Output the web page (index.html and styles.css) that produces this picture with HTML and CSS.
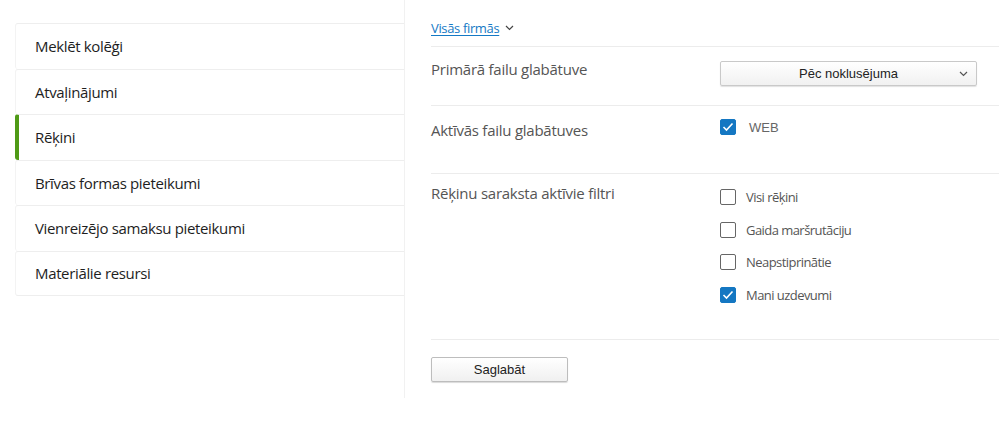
FILE: index.html
```html
<!DOCTYPE html>
<html lang="lv">
<head>
<meta charset="utf-8">
<link rel="stylesheet" href="styles.css">
</head>
<body>
<div class="page">
  <nav class="sidebar">
    <a class="nav-item">Meklēt kolēģi</a>
    <a class="nav-item">Atvaļinājumi</a>
    <a class="nav-item active">Rēķini</a>
    <a class="nav-item">Brīvas formas pieteikumi</a>
    <a class="nav-item">Vienreizējo samaksu pieteikumi</a>
    <a class="nav-item">Materiālie resursi</a>
  </nav>
  <main class="main">
    <div class="firm">
      <a class="firm-link">Visās firmās</a>
      <svg class="chev" width="9" height="6" viewBox="0 0 9 6"><path d="M1 1l3.5 3.5L8 1" fill="none" stroke="#444" stroke-width="1.2"/></svg>
    </div>
    <div class="row row-1">
      <div class="label">Primārā failu glabātuve</div>
      <div class="control">
        <div class="select">
          <span>Pēc noklusējuma</span>
          <svg class="select-chev" width="9" height="6" viewBox="0 0 9 6"><path d="M1 1l3.5 3.5L8 1" fill="none" stroke="#555" stroke-width="1.2"/></svg>
        </div>
      </div>
    </div>
    <div class="row row-2">
      <div class="label">Aktīvās failu glabātuves</div>
      <div class="control">
        <label class="check web"><span class="box checked"><svg width="12" height="10" viewBox="0 0 12 10"><path d="M1.5 5l3 3 6-6.5" fill="none" stroke="#fff" stroke-width="1.6"/></svg></span><span class="web-text">WEB</span></label>
      </div>
    </div>
    <div class="row row-3">
      <div class="label">Rēķinu saraksta aktīvie filtri</div>
      <div class="control checks">
        <label class="check"><span class="box"></span><span class="ctext">Visi rēķini</span></label>
        <label class="check"><span class="box"></span><span class="ctext">Gaida maršrutāciju</span></label>
        <label class="check"><span class="box"></span><span class="ctext">Neapstiprinātie</span></label>
        <label class="check"><span class="box checked"><svg width="12" height="10" viewBox="0 0 12 10"><path d="M1.5 5l3 3 6-6.5" fill="none" stroke="#fff" stroke-width="1.6"/></svg></span><span class="ctext">Mani uzdevumi</span></label>
      </div>
    </div>
    <div class="actions">
      <button class="btn">Saglabāt</button>
    </div>
  </main>
</div>
</body>
</html>
```
FILE: styles.css
```css
* { box-sizing: border-box; }
html, body { margin: 0; padding: 0; background: #fff; }
body { font-family: "Open Sans", "DejaVu Sans", sans-serif; color: #222; }

.page { display: flex; align-items: flex-start; }

.sidebar {
  width: 404px;
  padding: 23px 0 0 15px;
  display: flex;
  flex-direction: column;
}
.nav-item {
  display: flex;
  align-items: center;
  height: 45.5px;
  padding-left: 19px;
  font-size: 15px;
  letter-spacing: -0.35px;
  color: #1e1e1e;
  border-top: 1px solid #eeeeee;
  border-left: 1px solid #f3f3f3;
  border-radius: 3px 0 0 3px;
}
.nav-item:last-child { border-bottom: 1px solid #eeeeee; }
.nav-item.active {
  border-left: 4px solid #4f9a16;
  padding-left: 16px;
}

.main {
  flex: 1;
  height: 398px;
  border-left: 1px solid #f1f1f1;
  padding-left: 26px;
}

.firm {
  height: 47px;
  display: flex;
  align-items: center;
  gap: 6px;
  padding-top: 9px;
  border-bottom: 1px solid #ececec;
}
.firm-link {
  font-size: 13px;
  letter-spacing: -0.35px;
  color: #1479c5;
  text-decoration: underline;
  text-underline-offset: 2px;
}

.row {
  display: flex;
  border-bottom: 1px solid #ececec;
}
.label {
  width: 289px;
  font-size: 15px;
  color: #555;
  letter-spacing: -0.25px;
}
.row-1 { height: 59px; }
.row-1 .label { padding-top: 12px; }
.row-1 .control { padding-top: 14px; }
.row-2 { height: 68px; }
.row-2 .label { padding-top: 14px; }
.row-2 .control { padding-top: 13px; }
.row-3 { height: 166px; }
.row-3 .label { padding-top: 9px; }
.row-3 .control { padding-top: 15px; }

.select {
  width: 257px;
  height: 25px;
  border: 1px solid #c9c9c9;
  border-radius: 2px;
  background: linear-gradient(#fff, #f1f1f1);
  box-shadow: 0 1px 1px rgba(0,0,0,0.12);
  display: flex;
  align-items: center;
  justify-content: center;
  position: relative;
  font-family: "Liberation Sans", Arial, sans-serif;
  font-size: 13px;
  color: #222;
}
.select-chev { position: absolute; right: 8px; top: 9px; }

.checks { display: flex; flex-direction: column; gap: 16.5px; }
.check { display: flex; align-items: center; height: 16px; }
.box {
  width: 16px;
  height: 16px;
  border: 1.5px solid #666;
  border-radius: 2px;
  display: flex;
  align-items: center;
  justify-content: center;
  margin-right: 10px;
}
.box.checked { background: #1477c2; border-color: #1477c2; }
.ctext { font-size: 13px; color: #555; letter-spacing: -0.55px; }
.web-text {
  font-family: "Liberation Sans", Arial, sans-serif;
  font-size: 13px;
  color: #666;
  margin-left: 3px;
}

.actions { padding-top: 17px; }
.btn {
  width: 137px;
  height: 25px;
  border: 1px solid #bdbdbd;
  border-radius: 2px;
  background: linear-gradient(#fff, #f0f0f0);
  box-shadow: 0 1px 1px rgba(0,0,0,0.15);
  font-family: "Liberation Sans", Arial, sans-serif;
  font-size: 13px;
  color: #222;
  padding: 0;
}
```
